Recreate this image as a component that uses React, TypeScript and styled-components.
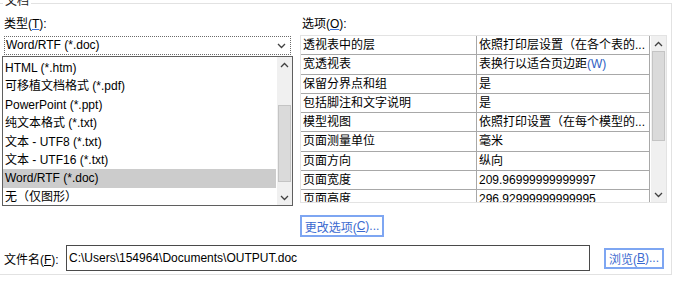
import React from 'react'
import styled, { createGlobalStyle } from 'styled-components'

const GlobalStyle = createGlobalStyle`
    html, body {
        margin: 0;
        padding: 0;
        background: #ffffff;
    }
    body {
        width: 680px;
        height: 282px;
        overflow: hidden;
        font-family: "Liberation Sans", "Noto Sans CJK SC", sans-serif;
        font-size: 12px;
        color: #000000;
    }
`

const fileTypes = [
    'HTML (*.htm)',
    '可移植文档格式 (*.pdf)',
    'PowerPoint (*.ppt)',
    '纯文本格式 (*.txt)',
    '文本 - UTF8 (*.txt)',
    '文本 - UTF16 (*.txt)',
    'Word/RTF (*.doc)',
    '无（仅图形）',
]

const Chevron = ({ up }: { up?: boolean }) => (
    <svg width="9" height="6" viewBox="0 0 9 6">
        <polyline
            points={up ? '1,5 4.5,1.5 8,5' : '1,1 4.5,4.5 8,1'}
            fill="none"
            stroke="#404040"
            strokeWidth="1.3"
        />
    </svg>
)

const App = () => {
    // key / value pairs of the export options
    const options: [string, React.ReactNode][] = [
        ['透视表中的层', '依照打印层设置（在各个表的...'],
        ['宽透视表', <>表换行以适合页边距<Blue>(W)</Blue></>],
        ['保留分界点和组', '是'],
        ['包括脚注和文字说明', '是'],
        ['模型视图', '依照打印设置（在每个模型的...'],
        ['页面测量单位', '毫米'],
        ['页面方向', '纵向'],
        ['页面宽度', '209.96999999999997'],
        ['页面高度', '296.92999999999995'],
    ]

    return (
        <>
            <GlobalStyle />
            <GroupBox>
                <Legend>文档</Legend>
                <TopGrid>
                    <Column>
                        <FieldLabel>类型(<u>T</u>):</FieldLabel>
                        <Combo>
                            <span>Word/RTF (*.doc)</span>
                            <Chevron />
                        </Combo>
                        <ListBox>
                            <ListItems>
                                {fileTypes.map((t) => (
                                    <ListItem key={t} selected={t === 'Word/RTF (*.doc)'}>
                                        {t}
                                    </ListItem>
                                ))}
                            </ListItems>
                            <ScrollBar>
                                <ArrowCell><Chevron up /></ArrowCell>
                                <Track>
                                    <Thumb top={33} height={77} />
                                </Track>
                                <ArrowCell><Chevron /></ArrowCell>
                            </ScrollBar>
                        </ListBox>
                    </Column>
                    <Column>
                        <FieldLabel>选项(<u>O</u>):</FieldLabel>
                        <TableFrame>
                            <OptionTable>
                                {options.map(([k, v]) => (
                                    <OptionRow key={k}>
                                        <KeyCell>{k}</KeyCell>
                                        <ValueCell>{v}</ValueCell>
                                    </OptionRow>
                                ))}
                            </OptionTable>
                            <ScrollBar>
                                <ArrowCell><Chevron up /></ArrowCell>
                                <Track>
                                    <Thumb top={0} height={90} />
                                </Track>
                                <ArrowCell><Chevron /></ArrowCell>
                            </ScrollBar>
                        </TableFrame>
                        <BlueButton width={84}>更改选项(<u>C</u>)...</BlueButton>
                    </Column>
                </TopGrid>
                <FileRow>
                    <FileLabel>文件名(<u>F</u>):</FileLabel>
                    <FileInput>C:\Users\154964\Documents\OUTPUT.doc</FileInput>
                    <BrowseButton width={60}>浏览(<u>B</u>)...</BrowseButton>
                </FileRow>
            </GroupBox>
        </>
    )
}

const GroupBox = styled.div`
    position: relative;
    box-sizing: border-box;
    margin-top: 3px;
    width: 672px;
    height: 272px;
    border: 1px solid #e2e2e2;
    border-left: none;
`

const Legend = styled.div`
    position: absolute;
    top: -10px;
    left: 3px;
    padding: 0 2px;
    background: #ffffff;
    line-height: 14px;
    color: #1a1a1a;
`

const TopGrid = styled.div`
    display: grid;
    grid-template-columns: 291px 367px;
    column-gap: 7px;
    padding-left: 2px;
`

const Column = styled.div`
    display: flex;
    flex-direction: column;
    align-items: flex-start;
`

const FieldLabel = styled.div`
    margin-top: 13px;
    padding-left: 2px;
    height: 14px;
    line-height: 14px;
    u {
        text-decoration-color: #3a6fd8;
    }
`

const Combo = styled.div`
    box-sizing: border-box;
    margin: 5px 2px 0;
    width: 287px;
    height: 19px;
    border: 1px dotted #6a6a6a;
    display: flex;
    align-items: center;
    justify-content: space-between;
    padding: 0 4px 0 1px;
    span {
        line-height: 17px;
    }
`

const ListBox = styled.div`
    box-sizing: border-box;
    margin-top: 1px;
    width: 291px;
    height: 150px;
    border: 1px solid #5f5f5f;
    display: flex;
    background: #ffffff;
`

const ListItems = styled.div`
    flex: 1;
    padding-top: 2px;
`

const ListItem = styled.div<{ selected?: boolean }>`
    height: 18.4px;
    line-height: 18.4px;
    padding-left: 2px;
    white-space: nowrap;
    background: ${(p) => (p.selected ? '#cccccc' : 'transparent')};
`

const ScrollBar = styled.div`
    width: 15px;
    display: flex;
    flex-direction: column;
    background: #f0f0f0;
    border-left: 1px solid #ffffff;
`

const ArrowCell = styled.div`
    height: 15px;
    display: flex;
    align-items: center;
    justify-content: center;
`

const Track = styled.div`
    position: relative;
    flex: 1;
`

const Thumb = styled.div<{ top: number; height: number }>`
    position: absolute;
    left: 1px;
    right: 1px;
    top: ${(p) => p.top}px;
    height: ${(p) => p.height}px;
    background: #dadada;
    border: 1px solid #c4c4c4;
    box-sizing: border-box;
`

const TableFrame = styled.div`
    box-sizing: border-box;
    margin-top: 4px;
    width: 367px;
    height: 168px;
    border: 1px solid #e3e3e3;
    display: flex;
    overflow: hidden;
    background: #ffffff;
`

const OptionTable = styled.div`
    flex: 1;
    overflow: hidden;
    border-right: 1px solid #a8a8a8;
`

const OptionRow = styled.div`
    display: grid;
    grid-template-columns: 176px 1fr;
    height: 19.3px;
    box-sizing: border-box;
    border-bottom: 1px solid #a8a8a8;
`

const KeyCell = styled.div`
    padding-left: 2px;
    line-height: 18px;
    border-right: 1px solid #a8a8a8;
    white-space: nowrap;
    overflow: hidden;
`

const ValueCell = styled.div`
    padding-left: 2px;
    line-height: 18px;
    white-space: nowrap;
    overflow: hidden;
`

const Blue = styled.span`
    color: #2f5fc4;
`

const BlueButton = styled.div<{ width: number }>`
    box-sizing: border-box;
    margin-top: 12px;
    width: ${(p) => p.width}px;
    height: 22px;
    border: 2px solid #7ea6f2;
    color: #3b6ad0;
    display: flex;
    align-items: center;
    justify-content: center;
    white-space: nowrap;
    background: #ffffff;
`

const BrowseButton = styled(BlueButton)`
    margin-top: 0;
    margin-left: 14px;
    height: 21px;
`

const FileRow = styled.div`
    display: flex;
    align-items: center;
    margin-top: 8px;
    padding-left: 4px;
`

const FileLabel = styled.div`
    width: 62px;
    white-space: nowrap;
`

const FileInput = styled.div`
    box-sizing: border-box;
    width: 524px;
    height: 26px;
    border: 1px solid #4a4a4a;
    padding-left: 2px;
    line-height: 24px;
    white-space: nowrap;
`

export default App
